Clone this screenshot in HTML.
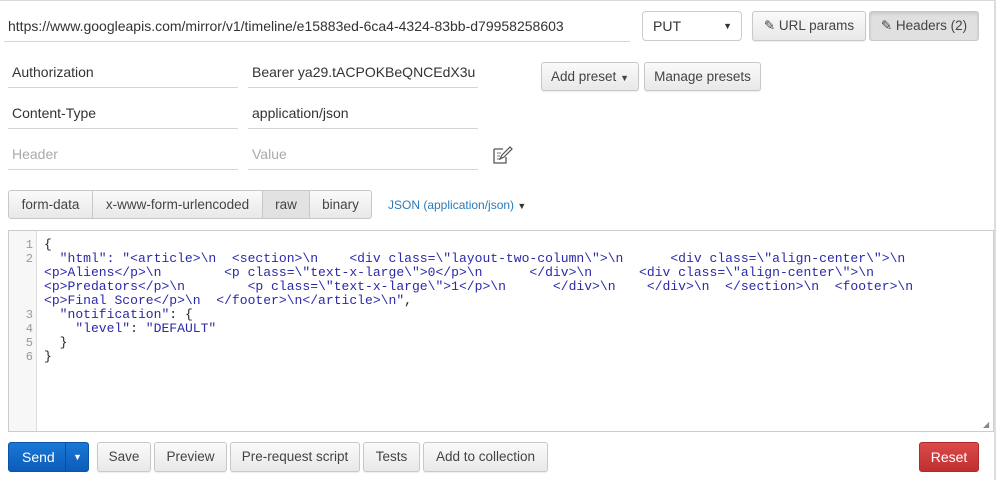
<!DOCTYPE html>
<html><head><meta charset="utf-8"><style>
*{box-sizing:border-box;margin:0;padding:0}
body{width:996px;height:480px;background:#fff;position:relative;overflow:hidden;font-family:"Liberation Sans",Arial,sans-serif;color:#333}
.a{position:absolute}
.in{position:absolute;border-bottom:1px solid #d5d5d5;font-size:14px;padding-left:4px;line-height:20px}
.btn{position:absolute;height:29px;border:1px solid #c8c8c8;border-radius:3px;background:linear-gradient(#fafafa,#e8e8e8);font-size:13.5px;color:#444;text-align:center;line-height:27px;white-space:nowrap;box-shadow:0 1px 1px rgba(0,0,0,.08)}
.seg{position:absolute;top:190px;height:29px;border:1px solid #c8c8c8;background:linear-gradient(#fafafa,#e8e8e8);font-size:13.5px;color:#444;text-align:center;line-height:27px}
.code{position:absolute;left:44px;top:238px;font-family:"Liberation Mono",monospace;font-size:13.05px;line-height:14px;white-space:pre;color:#2a2aa8}
.k{color:#222}
.ln{position:absolute;left:8px;top:238px;width:29px;text-align:right;padding-right:4px;font-family:"Liberation Mono",monospace;font-size:12px;line-height:14px;color:#999;white-space:pre}
</style></head><body>
<div class="a" style="left:0;top:0;width:996px;height:1px;background:#d8d8d8"></div>
<div class="a" style="left:994px;top:0;width:2px;height:480px;background:#ddd"></div>

<div class="in" style="left:4px;top:16px;width:626px;height:26px">https://www.googleapis.com/mirror/v1/timeline/e15883ed-6ca4-4324-83bb-d79958258603</div>
<div class="a" style="left:642px;top:11px;width:100px;height:30px;border:1px solid #ccc;border-radius:4px;font-size:14px;line-height:28px;padding-left:10px">PUT<span style="position:absolute;right:9px;font-size:9px">▼</span></div>
<div class="btn" style="left:752px;top:11px;width:114px;height:30px;line-height:28px">✎ URL params</div>
<div class="btn" style="left:869px;top:11px;width:110px;height:30px;line-height:28px;background:#e0e0e0;box-shadow:inset 0 2px 3px rgba(0,0,0,.1)">✎ Headers (2)</div>

<div class="in" style="left:8px;top:62px;width:230px;height:26px">Authorization</div>
<div class="in" style="left:248px;top:62px;width:230px;height:26px;overflow:hidden;white-space:nowrap">Bearer ya29.tACPOKBeQNCEdX3u</div>
<div class="in" style="left:8px;top:103px;width:230px;height:26px">Content-Type</div>
<div class="in" style="left:248px;top:103px;width:230px;height:26px">application/json</div>
<div class="in" style="left:8px;top:144px;width:230px;height:26px;color:#aaa">Header</div>
<div class="in" style="left:248px;top:144px;width:230px;height:26px;color:#aaa">Value</div>
<svg class="a" style="left:492px;top:145px" width="22" height="20" viewBox="0 0 22 20"><path d="M2 4h9M2 4v14h12v-6" fill="none" stroke="#555" stroke-width="1.3"/><path d="M5 8h4M5 11h3M5 14h3" stroke="#777"/><path d="M8 14l2-4 8-8 2 2-8 8z" fill="none" stroke="#555" stroke-width="1.2"/></svg>

<div class="btn" style="left:541px;top:62px;width:98px">Add preset <span style="font-size:9px">▼</span></div>
<div class="btn" style="left:644px;top:62px;width:117px">Manage presets</div>

<div class="seg" style="left:8px;width:85px;border-radius:3px 0 0 3px">form-data</div>
<div class="seg" style="left:92px;width:171px">x-www-form-urlencoded</div>
<div class="seg" style="left:262px;width:48px;background:#e2e2e2">raw</div>
<div class="seg" style="left:309px;width:63px;border-radius:0 3px 3px 0">binary</div>
<div class="a" style="left:388px;top:198px;font-size:12px;color:#2a7ab8">JSON (application/json) <span style="color:#333;font-size:9px">▼</span></div>

<div class="a" style="left:8px;top:230px;width:986px;height:202px;border:1px solid #ccc"></div>
<div class="a" style="left:9px;top:231px;width:28px;height:200px;background:#f7f7f7;border-right:1px solid #ddd"></div>
<div class="ln">1
2



3
4
5
6</div>
<div class="code"><span class="k">{</span>
  "html": "&lt;article&gt;\n  &lt;section&gt;\n    &lt;div class=\"layout-two-column\"&gt;\n      &lt;div class=\"align-center\"&gt;\n
&lt;p&gt;Aliens&lt;/p&gt;\n        &lt;p class=\"text-x-large\"&gt;0&lt;/p&gt;\n      &lt;/div&gt;\n      &lt;div class=\"align-center\"&gt;\n
&lt;p&gt;Predators&lt;/p&gt;\n        &lt;p class=\"text-x-large\"&gt;1&lt;/p&gt;\n      &lt;/div&gt;\n    &lt;/div&gt;\n  &lt;/section&gt;\n  &lt;footer&gt;\n
&lt;p&gt;Final Score&lt;/p&gt;\n  &lt;/footer&gt;\n&lt;/article&gt;\n"<span class="k">,</span>
  "notification"<span class="k">: {</span>
    "level"<span class="k">:</span> "DEFAULT"
<span class="k">  }</span>
<span class="k">}</span></div>
<div class="a" style="left:983px;top:420px;font-size:8px;color:#888">◢</div>

<div class="a" style="left:8px;top:442px;width:81px;height:30px;border-radius:3px;background:linear-gradient(#1a78d6,#0d5cb8);border:1px solid #0b55a8;color:#fff;font-size:14px;line-height:28px;padding-left:13px">Send<span style="position:absolute;left:56px;top:0;width:1px;height:28px;background:#0a4e9a"></span><span style="position:absolute;left:64px;font-size:9px">▼</span></div>
<div class="btn" style="left:97px;top:442px;width:54px;height:30px">Save</div>
<div class="btn" style="left:154px;top:442px;width:73px;height:30px">Preview</div>
<div class="btn" style="left:230px;top:442px;width:130px;height:30px">Pre-request script</div>
<div class="btn" style="left:363px;top:442px;width:57px;height:30px">Tests</div>
<div class="btn" style="left:423px;top:442px;width:125px;height:30px">Add to collection</div>
<div class="a" style="left:919px;top:442px;width:60px;height:30px;border-radius:3px;background:linear-gradient(#dc4a4a,#c03030);border:1px solid #b02a2a;color:#fff;font-size:14px;line-height:28px;text-align:center">Reset</div>
</body></html>
